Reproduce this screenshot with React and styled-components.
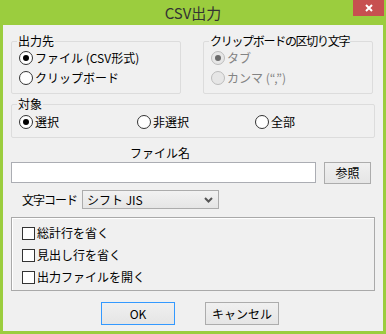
import styled, { createGlobalStyle } from 'styled-components';

const GlobalStyle = createGlobalStyle`
  html, body {
    margin: 0;
    padding: 0;
    background: #9bcd3e;
  }
  body {
    font-family: "Noto Sans CJK JP", "Noto Sans", sans-serif;
    font-size: 12px;
    color: #000;
  }
  * {
    box-sizing: border-box;
  }
`;

const Window = styled.div`
  width: 386px;
  height: 334px;
  background: #9bcd3e;
  display: flex;
  flex-direction: column;
  overflow: hidden;
`;

const TitleBar = styled.div`
  height: 25px;
  flex-shrink: 0;
  display: grid;
  grid-template-columns: 1fr auto 1fr;
`;

const Title = styled.div`
  grid-column: 2;
  padding-top: 4px;
  line-height: 18px;
  font-size: 15px;
  color: #333;
`;

const CloseButton = styled.div`
  grid-column: 3;
  justify-self: end;
  width: 31px;
  height: 16px;
  margin-right: 2px;
  background: #c75050;
  display: flex;
  align-items: center;
  justify-content: center;
`;

const Client = styled.div`
  flex: 1;
  margin: 0 3px 3px;
  background: #f0f0f0;
  padding: 9px 8px 0;
  display: flex;
  flex-direction: column;
`;

const Row = styled.div`
  display: flex;
  gap: 22px;
  flex-shrink: 0;
`;

const Group = styled.fieldset`
  margin: ${(p) => p.$top || 0}px 0 0;
  padding: 0 6px 5px 7px;
  border: 1px solid #dcdcdc;
  border-radius: 2px;
  width: ${(p) => p.$width || 'auto'};
  min-width: 0;
  flex-shrink: 0;
`;

const Legend = styled.legend`
  padding: 0 1px;
  margin-left: -2px;
  height: 14px;
  line-height: 14px;
  font-size: 12px;
  white-space: nowrap;
  letter-spacing: ${(p) => p.$tight ? '-1.3px' : '0'};
`;

const RadioGrid = styled.div`
  display: grid;
  grid-template-columns: repeat(3, 118px);
  padding-top: 1px;
`;

const Option = styled.label`
  display: flex;
  align-items: center;
  gap: 2px;
  height: ${(p) => p.$h || 20}px;
  line-height: 14px;
  color: ${(p) => (p.$disabled ? '#838383' : '#000')};
  white-space: nowrap;
`;

const RadioCircle = styled.span`
  width: 14px;
  height: 14px;
  border-radius: 50%;
  border: 1px solid ${(p) => (p.$disabled ? '#bcbcbc' : '#333')};
  background: ${(p) => (p.$disabled ? '#e6e6e6' : '#fff')};
  display: flex;
  align-items: center;
  justify-content: center;
  flex-shrink: 0;

  &::after {
    content: '';
    display: ${(p) => (p.$checked ? 'block' : 'none')};
    width: 6px;
    height: 6px;
    border-radius: 50%;
    background: ${(p) => (p.$disabled ? '#6a6a6a' : '#000')};
  }
`;

const CheckBox = styled.span`
  width: 13px;
  height: 13px;
  border: 1px solid #333;
  background: #fff;
  flex-shrink: 0;
`;

const FileLabel = styled.div`
  margin-top: 8px;
  padding-left: 119px;
  height: 14px;
  line-height: 14px;
`;

const FileRow = styled.div`
  margin-top: 2px;
  display: flex;
  align-items: flex-start;
  gap: 8px;
  flex-shrink: 0;
`;

const TextBox = styled.div`
  width: 305px;
  height: 21px;
  border: 1px solid #abadb3;
  background: #fff;
`;

const Button = styled.div`
  width: ${(p) => p.$w}px;
  height: ${(p) => p.$h}px;
  border: 1px solid ${(p) => (p.$primary ? '#3399ff' : '#acacac')};
  background: linear-gradient(#f0f0f0, #e5e5e5);
  display: flex;
  align-items: center;
  justify-content: center;
  font-size: 12px;
  line-height: 14px;
`;

const CodeRow = styled.div`
  margin-top: 6px;
  padding-left: 11px;
  height: 19px;
  display: flex;
  align-items: center;
  flex-shrink: 0;
`;

const CodeLabel = styled.span`
  width: 60px;
  letter-spacing: -1px;
  line-height: 14px;
`;

const Select = styled.div`
  width: 137px;
  height: 19px;
  border: 1px solid #acacac;
  background: linear-gradient(#f2f2f2, #e5e5e5);
  display: flex;
  align-items: center;
  justify-content: space-between;
  padding: 0 5px 0 4px;
  line-height: 14px;
`;

const CheckGroup = styled.div`
  margin-top: 8px;
  height: 74px;
  flex-shrink: 0;
  border: 1px solid #a9a9a9;
  box-shadow: inset 1px 1px 0 #fff;
  padding: 4px 0 2px 10px;
`;

const ButtonRow = styled.div`
  margin-top: 11px;
  padding-left: 90px;
  display: flex;
  gap: 30px;
`;

function Radio({ label, checked, disabled }) {
  return (
    <Option $disabled={disabled}>
      <RadioCircle $checked={checked} $disabled={disabled} />
      {label}
    </Option>
  );
}

function Check({ label }) {
  return (
    <Option $h={22}>
      <CheckBox />
      {label}
    </Option>
  );
}

export default function App() {
  return (
    <Window>
      <GlobalStyle />
      <TitleBar>
        <Title>CSV出力</Title>
        <CloseButton>
          <svg width="8" height="8" viewBox="0 0 8 8">
            <path d="M1 1L7 7M7 1L1 7" stroke="#fff" strokeWidth="2" />
          </svg>
        </CloseButton>
      </TitleBar>
      <Client>
        <Row>
          <Group $width="170px">
            <Legend>出力先</Legend>
            <Radio label="ファイル (CSV形式)" checked />
            <Radio label="クリップボード" />
          </Group>
          <Group $width="170px">
            <Legend $tight>クリップボードの区切り文字</Legend>
            <Radio label="タブ" checked disabled />
            <Radio label="カンマ (“,”)" disabled />
          </Group>
        </Row>
        <Group $top={3}>
          <Legend>対象</Legend>
          <RadioGrid>
            <Radio label="選択" checked />
            <Radio label="非選択" />
            <Radio label="全部" />
          </RadioGrid>
        </Group>
        <FileLabel>ファイル名</FileLabel>
        <FileRow>
          <TextBox />
          <Button $w={47} $h={22}>参照</Button>
        </FileRow>
        <CodeRow>
          <CodeLabel>文字コード</CodeLabel>
          <Select>
            <span>シフト JIS</span>
            <svg width="9" height="6" viewBox="0 0 9 6">
              <path d="M1 1L4.5 4.5L8 1" stroke="#555" strokeWidth="2" fill="none" />
            </svg>
          </Select>
        </CodeRow>
        <CheckGroup>
          <Check label="総計行を省く" />
          <Check label="見出し行を省く" />
          <Check label="出力ファイルを開く" />
        </CheckGroup>
        <ButtonRow>
          <Button $w={74} $h={23} $primary>OK</Button>
          <Button $w={74} $h={23}>キャンセル</Button>
        </ButtonRow>
      </Client>
    </Window>
  );
}
